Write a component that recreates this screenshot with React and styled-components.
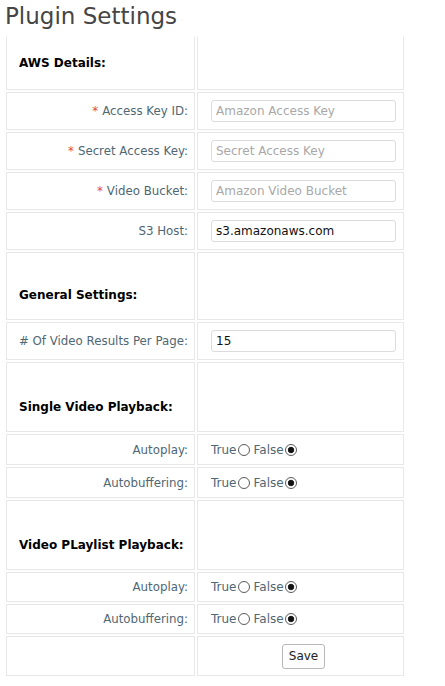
import styled, { createGlobalStyle } from 'styled-components'

const GlobalStyle = createGlobalStyle`
  body {
    margin: 0;
    background: #fff;
    font-family: "DejaVu Sans", sans-serif;
  }
`

const Page = styled.div`
  padding: 0 4px;
`

const Title = styled.h2`
  margin: 0;
  padding: 1px 0 0 1px;
  height: 33px;
  box-sizing: border-box;
  font-size: 23px;
  font-weight: normal;
  color: #454545;
  line-height: 30px;
`

const Table = styled.table`
  border-collapse: separate;
  border-spacing: 2px;
  margin-top: 1px;
`

const Row = styled.tr`
  height: ${p => p.h}px;
`

const Cell = styled.td`
  border: 1px solid #e8e8e8;
  border-top-color: ${p => (p.first ? 'transparent' : '#e8e8e8')};
  padding: 0 6px;
  font-size: 12px;
  color: #4f6773;
  box-sizing: border-box;
`

const LabelCell = styled(Cell)`
  width: 189px;
  text-align: right;
  vertical-align: middle;
  font-size: 11.8px;
`

const FieldCell = styled(Cell)`
  width: 207px;
  padding-left: 13px;
  vertical-align: middle;
`

const HeadCell = styled(Cell)`
  vertical-align: bottom;
  padding-left: 12px;
  padding-bottom: ${p => p.pb}px;
  font-weight: bold;
  color: #000;
`

const Star = styled.span`
  color: #e24b4b;
  margin-right: 4px;
`

const Input = styled.input`
  box-sizing: border-box;
  width: 185px;
  height: 22px;
  border: 1px solid #dcdcdc;
  border-radius: 3px;
  padding: 0 4px;
  font-family: "DejaVu Sans", sans-serif;
  font-size: 12px;
  color: #111;
  background: #fff;
  outline: none;
  display: block;
  &::placeholder {
    color: #a8a8a8;
  }
`

const Choice = styled.label`
  display: inline-flex;
  align-items: center;
  margin-right: 4px;
  font-size: 12px;
  color: #4f6773;
`

const Radio = styled.span`
  display: inline-block;
  box-sizing: border-box;
  width: 12px;
  height: 12px;
  margin-left: 1px;
  border-radius: 50%;
  border: 1px solid #5a5a5a;
  background: ${p =>
    p.checked
      ? 'radial-gradient(circle, #111 0 2.4px, #444 3px, #fff 3.6px)'
      : '#fff'};
`

const SaveButton = styled.button`
  display: block;
  margin: 0 auto;
  position: relative;
  left: 3px;
  height: 25px;
  padding: 0 6px;
  border: 1px solid #b8b8b8;
  border-radius: 3px;
  background: #fdfdfd;
  font-family: "DejaVu Sans", sans-serif;
  font-size: 12px;
  color: #222;
`

const Section = ({ title, h, pb, first }) => (
  <Row h={h}>
    <HeadCell first={first} pb={pb}>{title}</HeadCell>
    <Cell first={first} />
  </Row>
)

const TextField = ({ label, required, placeholder, value }) => (
  <Row h={38}>
    <LabelCell>
      {required && <Star>*</Star>}
      {label}
    </LabelCell>
    <FieldCell>
      <Input placeholder={placeholder} defaultValue={value} />
    </FieldCell>
  </Row>
)

const RadioField = ({ label, h }) => (
  <Row h={h}>
    <LabelCell>{label}</LabelCell>
    <FieldCell>
      <Choice>True<Radio /></Choice>
      <Choice>False<Radio checked /></Choice>
    </FieldCell>
  </Row>
)

const App = () => {
  return (
    <Page>
      <GlobalStyle />
      <Title>Plugin Settings</Title>
      <Table>
        <tbody>
          <Section first title='AWS Details:' h={54} pb={19} />
          <TextField required label='Access Key ID:' placeholder='Amazon Access Key' />
          <TextField required label='Secret Access Key:' placeholder='Secret Access Key' />
          <TextField required label='Video Bucket:' placeholder='Amazon Video Bucket' />
          <TextField label='S3 Host:' value='s3.amazonaws.com' />
          <Section title='General Settings:' h={68} pb={17} />
          <TextField label='# Of Video Results Per Page:' value='15' />
          <Section title='Single Video Playback:' h={70} pb={17} />
          <RadioField label='Autoplay:' h={31} />
          <RadioField label='Autobuffering:' h={31} />
          <Section title='Video PLaylist Playback:' h={70} pb={17} />
          <RadioField label='Autoplay:' h={30} />
          <RadioField label='Autobuffering:' h={30} />
          <Row h={40}>
            <Cell />
            <Cell><SaveButton>Save</SaveButton></Cell>
          </Row>
        </tbody>
      </Table>
    </Page>
  )
}

export default App
